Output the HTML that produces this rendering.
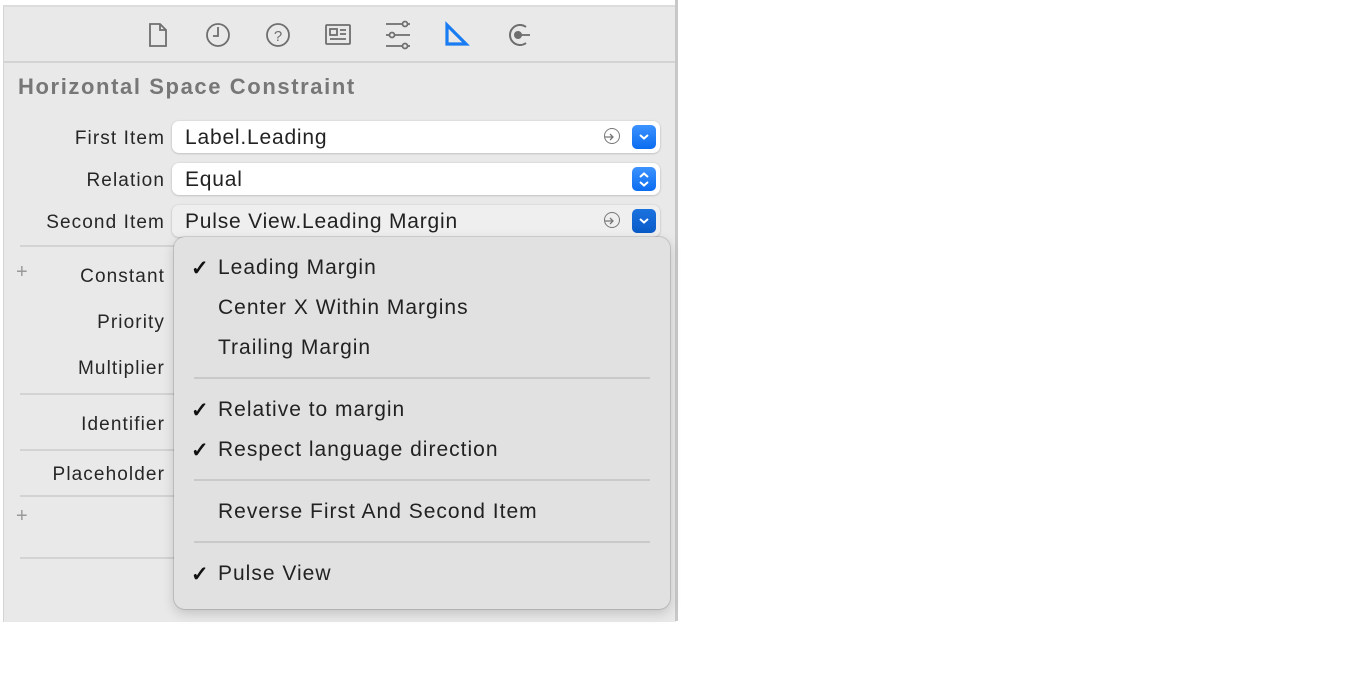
<!DOCTYPE html>
<html><head><meta charset="utf-8"><style>
body{margin:0;width:1356px;height:694px;background:#fff;position:relative;overflow:hidden;font-family:"Liberation Sans",sans-serif;}
#panel{position:absolute;left:3px;top:5px;width:672px;height:615px;background:#e9e9e9;border-left:1px solid #d4d4d4;border-top:2px solid #dcdcdc;}
#rb{position:absolute;left:675px;top:0;width:3px;height:621px;background:#c8c8c8;}
.hl{position:absolute;height:2px;background:#d3d3d3;}
.t{position:absolute;font-size:19px;color:#262626;white-space:nowrap;}
.lab{position:absolute;font-size:19px;letter-spacing:1.1px;color:#262626;text-align:right;width:161px;left:4px;}
.field{position:absolute;left:172px;width:488px;height:32px;background:#fff;border-radius:7px;box-shadow:0 0.5px 2px rgba(0,0,0,.25);}
.field.g{background:#efefef}
.field span{position:absolute;left:13px;top:5px;font-size:21px;letter-spacing:0.8px;color:#222;}
.btn{position:absolute;right:4px;top:4px;width:24px;height:24px;border-radius:5px;background:linear-gradient(#3d93ff,#0a6cf0);}
.btn.d{background:linear-gradient(#1a73e0,#0a5bc8);}
.arr{position:absolute;right:40px;top:7px;width:16px;height:16px;border:1.3px solid #777;border-radius:50%;box-sizing:border-box;}
#menu{position:absolute;left:174px;top:237px;width:496px;height:372px;background:#e1e1e1;border-radius:11px;box-shadow:0 0 0 1px rgba(0,0,0,.12),0 4px 12px rgba(0,0,0,.18);}
.mi{position:absolute;left:44px;font-size:21px;letter-spacing:1px;color:#222;white-space:nowrap;}
.ck{position:absolute;left:17px;font-size:21px;font-weight:bold;color:#111;}
.ms{position:absolute;left:20px;width:456px;height:2px;background:#c9c9c9;}
.plus{position:absolute;left:16px;font-size:20px;color:#999;}
</style></head><body>
<div id="panel"></div>
<div id="rb"></div>
<div class="hl" style="left:4px;top:61px;width:671px;"></div>
<svg style="position:absolute;left:0;top:0" width="680" height="62" fill="none" stroke="#6e6e6e" stroke-width="1.8">
<path d="M150 24h10l6 6v16h-16z M160 24v6h6"/>
<circle cx="218" cy="35" r="11"/><path d="M218 27v9h-5"/>
<circle cx="278" cy="35" r="11"/>
<text x="278" y="41" font-size="15" fill="#6e6e6e" stroke="none" text-anchor="middle" font-family="Liberation Sans">?</text>
<rect x="326" y="25" width="24" height="19" rx="1"/><rect x="330" y="29" width="7" height="6"/><path d="M340 30h6M340 34h6M330 39h16"/>
<path d="M386 24h24M386 35h24M386 46h24"/>
<circle cx="405" cy="24" r="2.5" fill="#e9e9e9"/><circle cx="392" cy="35" r="2.5" fill="#e9e9e9"/><circle cx="405" cy="46" r="2.5" fill="#e9e9e9"/>
<path d="M447 25v19h19z" stroke="#1a7cf2" stroke-width="3.2" stroke-linejoin="miter"/>
<path d="M526 27a10 10 0 1 0 0 16" stroke-width="2"/><circle cx="518" cy="35" r="4" fill="#6e6e6e" stroke="none"/><path d="M518 35h12"/>
</svg>
<div class="t" style="left:18px;top:74px;font-size:22px;letter-spacing:1.6px;font-weight:bold;color:#777;">Horizontal Space Constraint</div>

<div class="lab" style="top:128px">First Item</div>
<div class="lab" style="top:170px">Relation</div>
<div class="lab" style="top:212px">Second Item</div>
<div class="lab" style="top:266px">Constant</div>
<div class="lab" style="top:312px">Priority</div>
<div class="lab" style="top:358px">Multiplier</div>
<div class="lab" style="top:414px">Identifier</div>
<div class="lab" style="top:464px">Placeholder</div>
<div class="plus" style="top:261px">+</div>
<div class="plus" style="top:505px">+</div>
<div class="hl" style="left:20px;top:245px;width:160px;"></div>
<div class="hl" style="left:20px;top:393px;width:160px;"></div>
<div class="hl" style="left:20px;top:449px;width:160px;"></div>
<div class="hl" style="left:20px;top:495px;width:160px;"></div>
<div class="hl" style="left:20px;top:557px;width:160px;"></div>

<div class="field" style="top:121px"><span>Label.Leading</span><div class="arr"></div><div class="btn"></div></div>
<div class="field" style="top:163px"><span>Equal</span><div class="btn"></div></div>
<div class="field g" style="top:205px"><span>Pulse View.Leading Margin</span><div class="arr"></div><div class="btn d"></div></div>
<svg style="position:absolute;left:0;top:0" width="680" height="240" fill="none" stroke="#fff" stroke-width="2">
<path d="M640 135l4 3.5 4-3.5M640 219l4 3.5 4-3.5M640 177l4-3.5 4 3.5M640 182l4 3.5 4-3.5"/>
<g stroke="#777" stroke-width="1.3"><path d="M605 137h8M610 134l3 3-3 3M605 221h8M610 218l3 3-3 3"/></g>
</svg>

<div id="menu">
<div class="ck" style="top:19px">✓</div><div class="mi" style="top:19px">Leading Margin</div>
<div class="mi" style="top:59px">Center X Within Margins</div>
<div class="mi" style="top:99px">Trailing Margin</div>
<div class="ms" style="top:140px"></div>
<div class="ck" style="top:161px">✓</div><div class="mi" style="top:161px">Relative to margin</div>
<div class="ck" style="top:201px">✓</div><div class="mi" style="top:201px">Respect language direction</div>
<div class="ms" style="top:242px"></div>
<div class="mi" style="top:263px">Reverse First And Second Item</div>
<div class="ms" style="top:304px"></div>
<div class="ck" style="top:325px">✓</div><div class="mi" style="top:325px">Pulse View</div>
</div>
</body></html>
